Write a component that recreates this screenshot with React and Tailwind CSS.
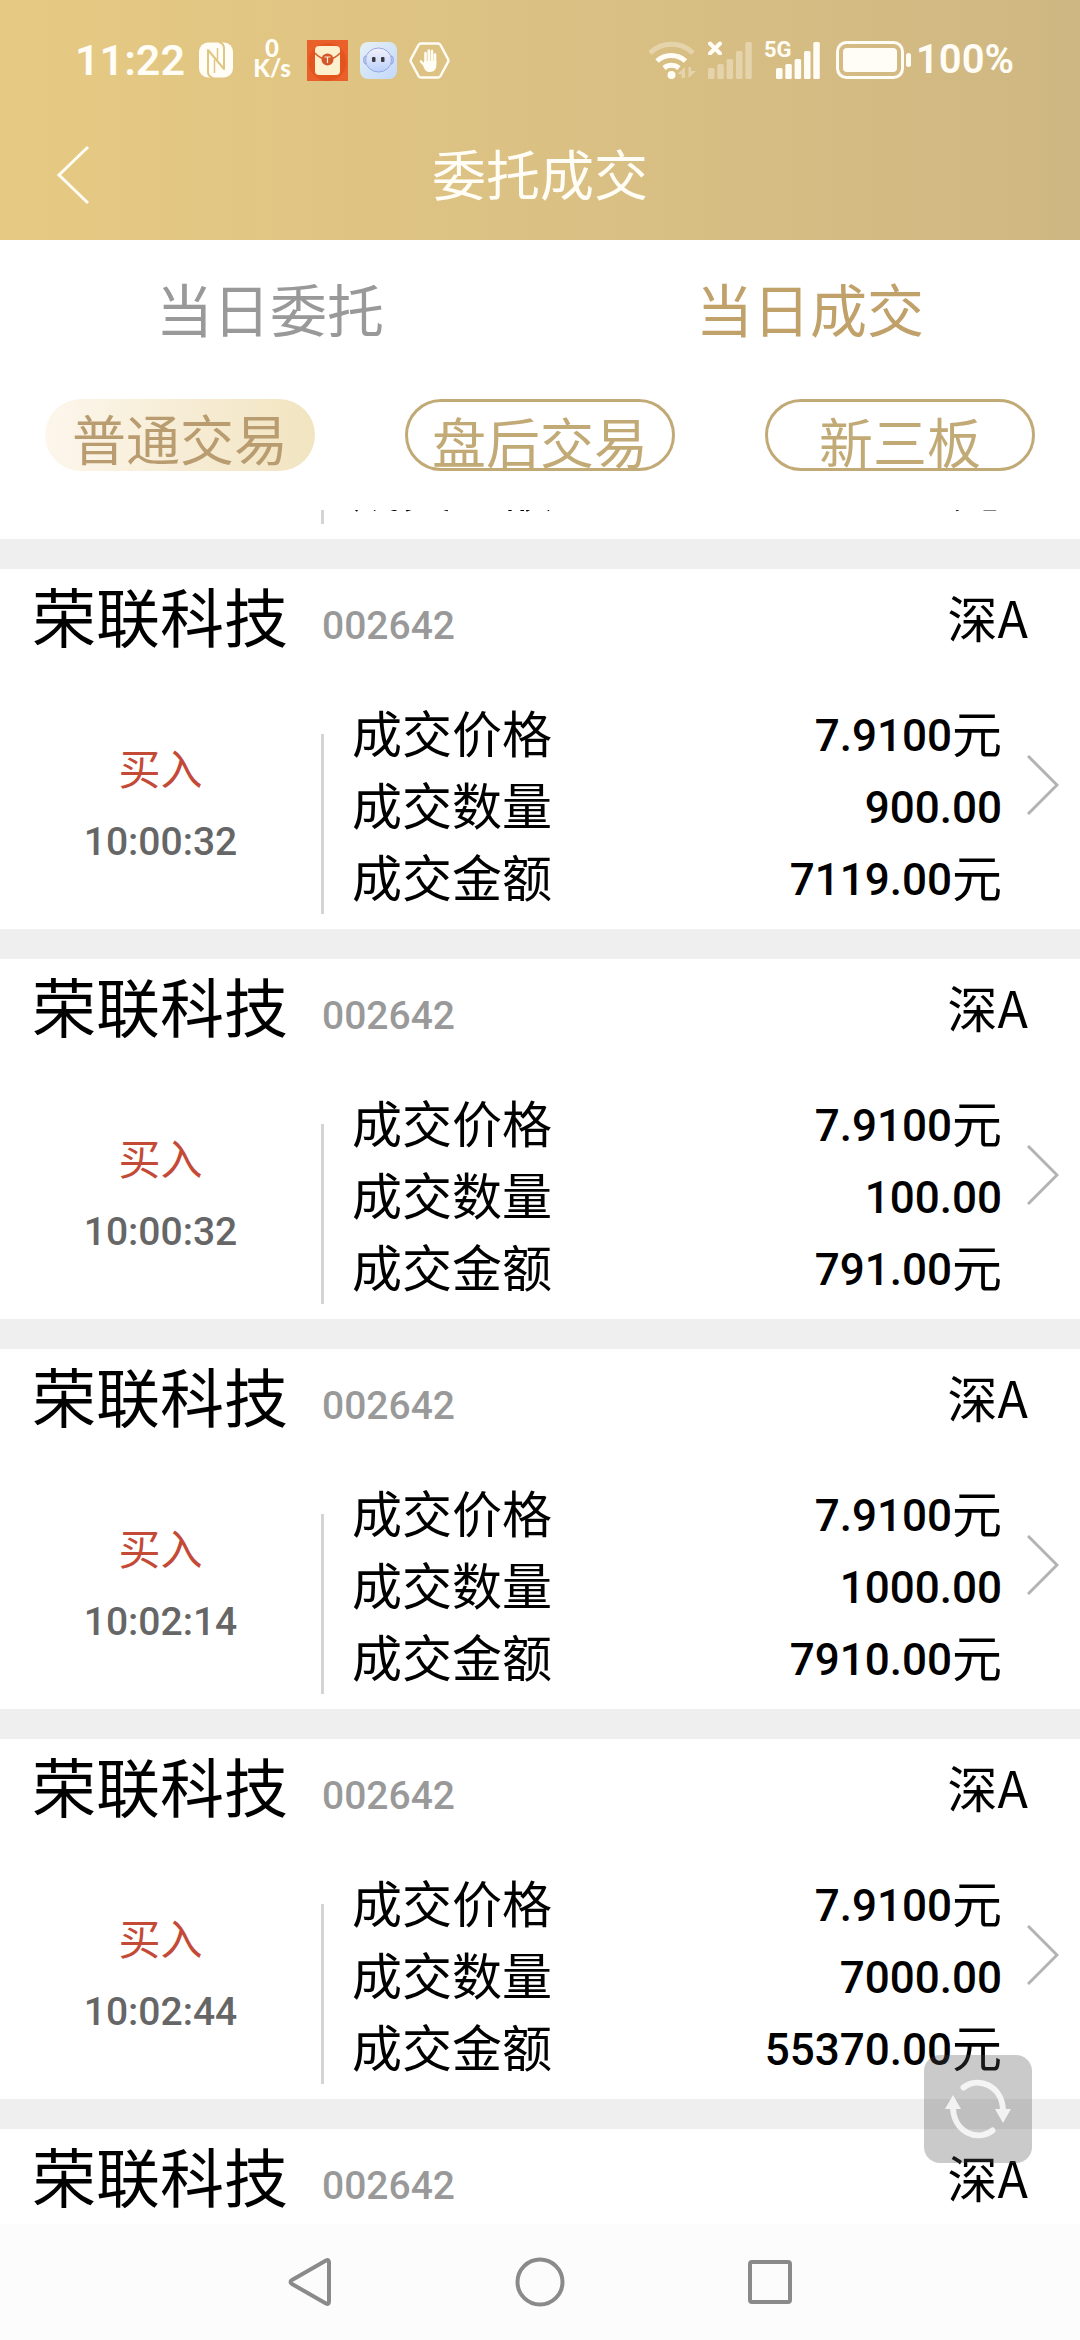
import React, { useState } from 'react';
import clsx from 'clsx';

const trades = [
  { id: 1, time: '10:00:32', price: '7.9100', amount: '900.00', total: '7119.00' },
  { id: 2, time: '10:00:32', price: '7.9100', amount: '100.00', total: '791.00' },
  { id: 3, time: '10:02:14', price: '7.9100', amount: '1000.00', total: '7910.00' },
  { id: 4, time: '10:02:44', price: '7.9100', amount: '7000.00', total: '55370.00' },
];

const tabs = ['当日委托', '当日成交'];
const markets = ['普通交易', '盘后交易', '新三板'];

function NfcIcon() {
  return (
    <svg className="w-[34px] h-[36px]" viewBox="0 0 34 36" fill="none">
      <rect y="0.500" width="34" height="35" rx="9" fill="#fffdf5" />
      <g stroke="#e0c683" strokeWidth="2" strokeLinejoin="round">
        <path d="M14 36c-3-1-5-3-5-6V8l16 19V6c0-3-2-5-5-6" />
        <path d="M15.500 17.500V31M18.500 18.500V6" strokeWidth="1.500" />
      </g>
    </svg>
  );
}

function EnvelopeIcon() {
  return (
    <svg className="w-[41px] h-[41px]" viewBox="0 0 41 41">
      <rect width="41" height="41" fill="#e9602b" />
      <circle cx="20.500" cy="22" r="19" fill="#e4541f" />
      <rect x="8" y="6" width="25" height="29" rx="4" fill="#fdf0cd" />
      <path d="M8 13c4 5 8 6 12.500 6S29 18 33 13" fill="none" stroke="#d9602c" strokeWidth="1.500" />
      <circle cx="20.500" cy="19.500" r="6" fill="#d5562a" />
      <path d="M17.500 17h6M20.500 17v6" stroke="#fdf0cd" strokeWidth="1.200" />
    </svg>
  );
}

function RobotIcon() {
  return (
    <svg className="w-[37px] h-[37px]" viewBox="0 0 37 37">
      <defs>
        <linearGradient id="robot" x1="0" y1="0" x2="1" y2="1">
          <stop offset="0" stopColor="#e6f0f4" />
          <stop offset="1" stopColor="#c3d9fb" />
        </linearGradient>
        <linearGradient id="face" x1="0" y1="0" x2="0" y2="1">
          <stop offset="0" stopColor="#f4f1fb" />
          <stop offset="1" stopColor="#b9d0fb" />
        </linearGradient>
      </defs>
      <rect width="37" height="37" rx="8" fill="url(#robot)" />
      <path d="M6 14c-3 1-3 7 0 8M31 14c3 1 3 7 0 8" fill="none" stroke="#9fb0e6" strokeWidth="1.500" />
      <ellipse cx="18.500" cy="18" rx="13" ry="12" fill="url(#face)" stroke="#98a8e2" strokeWidth="1" />
      <rect x="12" y="15" width="3.500" height="5" rx="1" fill="#3d3a42" />
      <rect x="21" y="15" width="3.500" height="5" rx="1" fill="#3d3a42" />
    </svg>
  );
}

function HandIcon() {
  return (
    <svg className="w-[41px] h-[37px]" viewBox="0 0 41 37" fill="none" stroke="#fffdf5" strokeLinecap="round" strokeLinejoin="round">
      <path d="M12 1.500h17a3 3 0 0 1 2.500 1.500l7.500 14a3 3 0 0 1 0 3l-7.500 14a3 3 0 0 1-2.500 1.500H12A3 3 0 0 1 9.500 34L2 20a3 3 0 0 1 0-3L9.500 3A3 3 0 0 1 12 1.500z" strokeWidth="2.500" />
      <path d="M15 19h12.300v5c0 3-2.500 6-6.300 6s-5-2-6.500-5z" fill="#fffdf5" stroke="none" />
      <path d="M16.500 21V11M19.800 20V8.500M23 20V9M26 22V12.500M16.500 24.500L12 19.500" strokeWidth="2.600" />
    </svg>
  );
}

function WifiIcon() {
  return (
    <svg className="w-[48px] h-[38px]" viewBox="0 0 48 38" fill="none" strokeWidth="5" strokeLinecap="butt">
      <path d="M2 12a31 31 0 0 1 43 0" stroke="#fffdf5" strokeOpacity="0.35" />
      <path d="M9 20a21 21 0 0 1 28.500 0" stroke="#fffdf5" />
      <path d="M16 27a12 12 0 0 1 15 0" stroke="#fffdf5" />
      <circle cx="23.500" cy="34" r="4" fill="#fffdf5" />
      <path d="M37 26v11h-3.500v-4h-4zM40.500 37V26H43v4h5L40.500 37z" fill="#fffdf5" fillOpacity="0.35" />
    </svg>
  );
}

function SignalBars({ faded }) {
  return (
    <svg className="w-[44px] h-[38px]" viewBox="0 0 44 38" fill="#fffdf5" fillOpacity={faded ? 0.35 : 1}>
      <rect x="0" y="27" width="6.500" height="11" rx="1.500" />
      <rect x="9.300" y="23" width="6.500" height="15" rx="1.500" />
      <rect x="18.600" y="18" width="6.500" height="20" rx="1.500" />
      <rect x="28" y="10" width="6.500" height="28" rx="1.500" />
      <rect x="37.300" y="1" width="6.500" height="37" rx="1.500" />
    </svg>
  );
}

function BatteryIcon() {
  return (
    <svg className="w-[76px] h-[38px]" viewBox="0 0 76 38" fill="none">
      <rect x="1.500" y="1.500" width="65" height="35" rx="9" stroke="#fffdf5" strokeWidth="3" />
      <rect x="7" y="7" width="54" height="24" rx="4" fill="#fffdf5" />
      <rect x="70" y="12" width="5" height="14" rx="2.500" fill="#fffdf5" />
    </svg>
  );
}

function StatusBar() {
  return (
    <div className="flex h-[120px] items-center justify-between pl-[75px] pr-[66px] text-[#fffdf5]">
      <div className="flex items-center">
        <span className="w-[124px] font-['Roboto',sans-serif] text-[43px] font-semibold leading-none">11:22</span>
        <NfcIcon />
        <div className="mx-4 flex w-[42px] flex-col items-end pb-1 font-['Lato',sans-serif] text-[24px] font-black leading-[20px]">
          <span className="pr-3">0</span>
          <span>K/s</span>
        </div>
        <div className="flex items-center gap-3">
          <EnvelopeIcon />
          <RobotIcon />
          <HandIcon />
        </div>
      </div>
      <div className="flex items-center">
        <WifiIcon />
        <div className="relative ml-3">
          <SignalBars faded />
          <svg className="absolute left-0 top-0 h-[14px] w-[14px]" viewBox="0 0 14 14" fill="none" stroke="#fffdf5" strokeWidth="4" strokeLinecap="round">
            <path d="M2 2.500l10 10M12 2.500l-10 10" />
          </svg>
        </div>
        <div className="relative ml-6">
          <SignalBars />
          <span className="absolute -left-3 -top-1 font-['Roboto',sans-serif] text-[22px] font-bold leading-[26px]">5G</span>
        </div>
        <div className="ml-4">
          <BatteryIcon />
        </div>
        <span className="ml-1 font-['Roboto',sans-serif] text-[40px] font-semibold leading-none">100%</span>
      </div>
    </div>
  );
}

function DetailRow({ label, value, unit }) {
  return (
    <div className="flex h-[72px] items-center justify-between text-[50px] leading-[72px]">
      <dt>{label}</dt>
      <dd className="flex items-center">
        {value && <span className="pt-2.5 font-['Roboto',sans-serif] text-[44px] font-medium">{value}</span>}
        {unit}
      </dd>
    </div>
  );
}

function CardHeader() {
  return (
    <div className="flex h-[95px] items-center pb-1.5 pl-8 pr-[52px]">
      <h2 className="text-[64px] leading-[90px]">荣联科技</h2>
      <span className="ml-[34px] pt-[26px] font-['Roboto',sans-serif] text-[39px] font-medium text-[#999999]">002642</span>
      <span className="ml-auto pt-1.5 text-[50px]">深A</span>
    </div>
  );
}

function TradeCard({ trade }) {
  return (
    <li className="border-b-[30px] border-[#efefef] bg-white">
      <CardHeader />
      <a href="#detail" className="flex h-[265px] items-end pb-[15px]" aria-label={`荣联科技 ${trade.time}`}>
        <div className="flex h-[180px] w-[30%] shrink-0 flex-col items-center gap-1.5 border-r-[3px] border-[#d4d4d4] text-[42px]">
          <span className="leading-[66px] text-[#c44a38]">买入</span>
          <span className="font-['Roboto',sans-serif] text-[39px] font-medium leading-[72px] text-[#666666]">{trade.time}</span>
        </div>
        <dl className="flex-1 pb-[3px] pl-7">
          <DetailRow label="成交价格" value={trade.price} unit="元" />
          <DetailRow label="成交数量" value={trade.amount} />
          <DetailRow label="成交金额" value={trade.total} unit="元" />
        </dl>
        <div className="mb-[99px] flex w-[78px] justify-end pr-[21px]">
          <svg className="h-[60px] w-[32px]" viewBox="0 0 32 60" fill="none" stroke="#b3b3b3" strokeWidth="3">
            <path d="M1 1l29 29L1 59" />
          </svg>
        </div>
      </a>
    </li>
  );
}

export default function App() {
  const [tab, setTab] = useState(1);
  const [market, setMarket] = useState(0);

  return (
    <div className="flex h-screen flex-col overflow-hidden bg-white font-['Noto_Sans_CJK_SC',sans-serif] text-black">
      <header className="h-[240px] shrink-0 bg-linear-to-r from-[#e6ca83] to-[#cfb783]">
        <StatusBar />
        <div className="grid h-[110px] grid-cols-3 items-center">
          <button type="button" aria-label="返回" className="ml-14">
            <svg className="h-[60px] w-[34px]" viewBox="0 0 34 60" fill="none" stroke="#fffdf5" strokeWidth="3">
              <path d="M32 2L3 30l29 28" />
            </svg>
          </button>
          <h1 className="pb-1 text-center text-[54px] leading-[72px] text-[#fffdf5]">委托成交</h1>
        </div>
      </header>

      <nav className="grid h-[144px] shrink-0 grid-cols-2">
        {tabs.map((name, i) => (
          <button
            key={name}
            type="button"
            onClick={() => setTab(i)}
            className={clsx('pb-2.5 text-[57px] leading-[72px]', tab === i ? 'text-[#c0a16a]' : 'text-[#999999]')}
          >
            {name}
          </button>
        ))}
      </nav>

      <div className="grid h-[126px] shrink-0 grid-cols-3 gap-[90px] px-[45px] pt-[15px]">
        {markets.map((name, i) => (
          <button
            key={name}
            type="button"
            onClick={() => setMarket(i)}
            className={clsx(
              'flex h-[72px] items-start justify-center overflow-hidden rounded-full text-[54px] leading-[78px]',
              market === i
                ? 'bg-linear-to-r from-[#fdf6ec] to-[#f1e4c0] text-[#b99d70]'
                : 'border-[3px] border-[#c2aa76] text-[#c2aa76]'
            )}
          >
            {name}
          </button>
        ))}
      </div>

      <main className="relative min-h-0 flex-1">
        <ul className="h-full overflow-hidden">
          {/* bottom edge of the card scrolled under the filter bar */}
          <li className="flex h-[59px] items-end overflow-hidden border-b-[30px] border-[#efefef]">
            <div className="mb-[15px] h-[180px] w-[30%] shrink-0 border-r-[3px] border-[#d4d4d4]" />
            <dl className="mb-[15px] flex-1 pb-[3px] pl-7 pr-[78px]">
              <DetailRow label="成交金额" unit="元" />
            </dl>
          </li>
          {trades.map((trade) => (
            <TradeCard key={trade.id} trade={trade} />
          ))}
          <li>
            <CardHeader />
          </li>
        </ul>
        <button
          type="button"
          aria-label="刷新"
          className="absolute bottom-[61px] right-12 flex h-[108px] w-[108px] items-center justify-center rounded-2xl bg-[#505050]/30"
        >
          <svg className="h-[60px] w-[66px]" viewBox="0 0 66 60" fill="#ffffff" opacity="0.8">
            <g fill="none" stroke="#ffffff" strokeWidth="6" strokeLinecap="round">
              <path d="M18.500 8.500C34-3 57 7 58 31" />
              <path d="M47.500 51.500C32 63 9 53 8 29" />
            </g>
            <path d="M50 30h16l-8 14zM0 30h16L8 16z" />
          </svg>
        </button>
      </main>

      <footer className="grid h-[116px] shrink-0 grid-cols-3 items-center justify-items-center bg-[#fcfcfc] px-[18%]">
        <button type="button" aria-label="系统返回">
          <svg className="h-[50px] w-[44px]" viewBox="0 0 44 50" fill="none" stroke="#8a8a8a" strokeWidth="4" strokeLinejoin="round">
            <path d="M38 3.500c2-1 3 0 3 2v39c0 2-1 3-3 2L4 27c-2-1-2-3 0-4z" />
          </svg>
        </button>
        <button type="button" aria-label="主页">
          <svg className="h-[50px] w-[50px]" viewBox="0 0 50 50" fill="none" stroke="#8a8a8a" strokeWidth="4">
            <circle cx="25" cy="25" r="22.500" />
          </svg>
        </button>
        <button type="button" aria-label="最近任务">
          <svg className="h-[44px] w-[44px]" viewBox="0 0 44 44" fill="none" stroke="#8a8a8a" strokeWidth="4">
            <rect x="2" y="2" width="40" height="40" rx="2" />
          </svg>
        </button>
      </footer>
    </div>
  );
}
